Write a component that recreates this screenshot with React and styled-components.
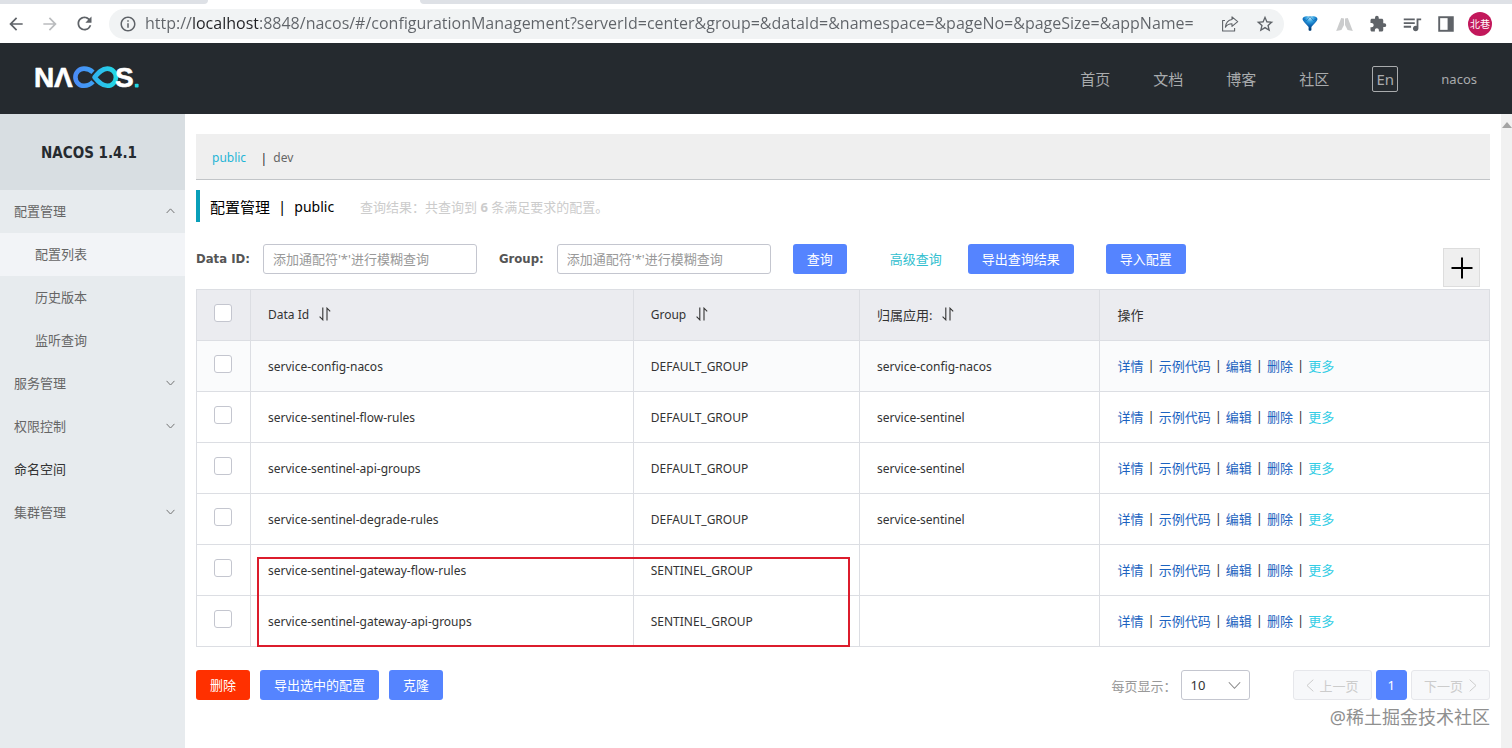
import styled, { createGlobalStyle, css } from "styled-components";
import { useState } from "react";
import {
  MdArrowBack,
  MdArrowForward,
  MdRefresh,
  MdInfoOutline,
  MdStarBorder,
  MdExtension,
  MdQueueMusic,
} from "react-icons/md";

const url =
  "http://localhost:8848/nacos/#/configurationManagement?serverId=center&group=&dataId=&namespace=&pageNo=&pageSize=&appName=";

const menu = [
  { name: "配置管理", arrow: "up" },
  { name: "配置列表", child: true, active: true },
  { name: "历史版本", child: true },
  { name: "监听查询", child: true },
  { name: "服务管理", arrow: "down" },
  { name: "权限控制", arrow: "down" },
  { name: "命名空间", dark: true },
  { name: "集群管理", arrow: "down" },
];

const configs = [
  { id: "service-config-nacos", group: "DEFAULT_GROUP", app: "service-config-nacos" },
  { id: "service-sentinel-flow-rules", group: "DEFAULT_GROUP", app: "service-sentinel" },
  { id: "service-sentinel-api-groups", group: "DEFAULT_GROUP", app: "service-sentinel" },
  { id: "service-sentinel-degrade-rules", group: "DEFAULT_GROUP", app: "service-sentinel" },
  { id: "service-sentinel-gateway-flow-rules", group: "SENTINEL_GROUP", app: "" },
  { id: "service-sentinel-gateway-api-groups", group: "SENTINEL_GROUP", app: "" },
];

const actions = ["详情", "示例代码", "编辑", "删除"];

const Logo = () => (
  <svg width="110" height="40" viewBox="-2 -6 110 40" role="img" aria-label="NACOS">
    <defs>
      <linearGradient id="loopLeft" x1="0" y1="0" x2="1" y2="0">
        <stop offset="0" stopColor="#4a8cf7" />
        <stop offset="1" stopColor="#3fa0f4" />
      </linearGradient>
      <linearGradient id="loopRight" x1="0" y1="0" x2="1" y2="0">
        <stop offset="0" stopColor="#2fb4f0" />
        <stop offset="1" stopColor="#22d8e4" />
      </linearGradient>
    </defs>
    <LogoText x="-1" y="22">N</LogoText>
    <LogoText x="19" y="22">Λ</LogoText>
    <path
      d="M58 7.2 C55 4.4 52 3.6 49 3.6 A8.6 8.6 0 0 0 49 20.8 C52.5 20.8 55.5 19.6 58 16.8"
      fill="none"
      stroke="url(#loopLeft)"
      strokeWidth="4.6"
    />
    <path
      d="M59.5 12.2 C63.5 7.6 67 3.6 72.3 3.6 A8.6 8.6 0 0 1 72.3 20.8 C67 20.8 63.5 16.8 59.5 12.2 Z"
      fill="none"
      stroke="url(#loopRight)"
      strokeWidth="4.6"
      strokeLinejoin="round"
    />
    <LogoText x="80" y="22">S</LogoText>
    <rect x="99.8" y="18.8" width="3.8" height="3.8" rx="0.8" fill="#22d8e4" />
  </svg>
);

const Chevron = ({ dir, size = 9 }) => {
  const paths = {
    up: "M1 9 L8 1.5 L15 9",
    down: "M1 1.5 L8 9 L15 1.5",
  };
  return (
    <svg width={size} height={size * 0.66} viewBox="0 0 16 10.5" fill="none" stroke="currentColor" strokeWidth={size > 10 ? 1.3 : 1.6}>
      <path d={paths[dir]} />
    </svg>
  );
};

const SideChevron = ({ dir }) => (
  <svg width="8" height="13" viewBox="0 0 8 13" fill="none" stroke="currentColor">
    <path d={dir === "left" ? "M7.3 0.7 L1 6.5 L7.3 12.3" : "M0.7 0.7 L7 6.5 L0.7 12.3"} />
  </svg>
);

const SortIcon = () => (
  <svg width="12" height="14" viewBox="0 0 12 14" fill="none" stroke="#333" strokeWidth="1.1">
    <path d="M3.8 0.5 V12.8 L0.6 9.6" />
    <path d="M8 13.5 V1.2 L11.2 4.4" />
  </svg>
);

const ShareIcon = () => (
  <svg width="18" height="18" viewBox="0 0 18 18" fill="none" stroke="#5f6368" strokeWidth="1.1" strokeLinejoin="round">
    <path d="M4 5.5 H1.6 V16 H13.6 V13" />
    <path d="M11 1.8 L16.7 6.6 L11 11.4 V8.7 C8 8.7 6 9.7 4.4 12.2 C4.8 8 7 5 11 4.5 Z" />
  </svg>
);

const PinIcon = () => (
  <svg width="16" height="17" viewBox="0 0 16 17">
    <defs>
      <radialGradient id="pin" cx="0.5" cy="0.12" r="0.75">
        <stop offset="0" stopColor="#b5e8fb" />
        <stop offset="0.35" stopColor="#2f9fe0" />
        <stop offset="0.7" stopColor="#0a62b0" />
        <stop offset="1" stopColor="#033f76" />
      </radialGradient>
    </defs>
    <path
      d="M0.5 4 C0.8 2.2 2.6 1.2 4.4 1.2 H11.6 C13.4 1.2 15.2 2.2 15.5 4 C15 6.6 11.4 9.6 9.4 12 V15.2 L8 16 L6.6 15.2 V12 C4.6 9.6 1 6.6 0.5 4 Z"
      fill="url(#pin)"
    />
    <path d="M1 3.6 L4.6 5.6 L8 1.6 L11.4 5.6 L15 3.6" fill="none" stroke="#0a62b0" strokeWidth="0.6" />
  </svg>
);

const PeaksIcon = () => (
  <svg width="17" height="14" viewBox="0 0 17 14" fill="#cbcccd">
    <path d="M0.2 14 L5.2 1 L8 1.4 V8 L5.4 13 Z" />
    <path d="M16.8 14 L11.8 1 L9 1.4 V8 L11.6 13 Z" />
  </svg>
);

const PanelIcon = () => (
  <svg width="16" height="16" viewBox="0 0 16 16">
    <rect x="1.2" y="1.2" width="13.6" height="13.6" fill="none" stroke="#5f6368" strokeWidth="1.9" />
    <rect x="9.6" y="1" width="5.4" height="14" fill="#5f6368" />
  </svg>
);

const App = () => {
  const [address, setAddress] = useState(url);

  return (
    <>
      <GlobalStyle />
      <Page>
        <TabStrip>
          <Tab $w="208px" $side="right" />
          <Tab $side="left" />
        </TabStrip>
        <Toolbar>
          <IconButton aria-label="Back">
            <MdArrowBack size={20} />
          </IconButton>
          <IconButton aria-label="Forward" $faded>
            <MdArrowForward size={20} />
          </IconButton>
          <IconButton aria-label="Reload">
            <MdRefresh size={21} />
          </IconButton>
          <AddressBar>
            <MdInfoOutline size={18} />
            <AddressInput
              aria-label="Address"
              value={address}
              onChange={(e) => setAddress(e.target.value)}
            />
            <IconButton aria-label="Share">
              <ShareIcon />
            </IconButton>
            <IconButton aria-label="Bookmark">
              <MdStarBorder size={20} />
            </IconButton>
          </AddressBar>
          <Extensions>
            <Slot>
              <PinIcon />
            </Slot>
            <Slot>
              <PeaksIcon />
            </Slot>
            <Slot>
              <MdExtension size={18} />
            </Slot>
            <Slot>
              <MdQueueMusic size={22} />
            </Slot>
            <Slot>
              <PanelIcon />
            </Slot>
            <Avatar>北巷</Avatar>
          </Extensions>
        </Toolbar>

        <Header>
          <Logo />
          <Nav>
            <NavLink href="#home">首页</NavLink>
            <NavLink href="#docs">文档</NavLink>
            <NavLink href="#blog">博客</NavLink>
            <NavLink href="#community">社区</NavLink>
            <LangButton>En</LangButton>
            <UserLink href="#user">nacos</UserLink>
          </Nav>
        </Header>

        <Body>
          <Sidebar>
            <Version>NACOS 1.4.1</Version>
            {menu.map((item) => (
              <MenuItem
                key={item.name}
                href="#menu"
                $child={item.child}
                $active={item.active}
                $dark={item.dark}
              >
                {item.name}
                {item.arrow && <Chevron dir={item.arrow} />}
              </MenuItem>
            ))}
          </Sidebar>

          <Main>
            <Namespaces>
              <NsLink href="#public" $active>
                public
              </NsLink>
              <span>|</span>
              <NsLink href="#dev">dev</NsLink>
            </Namespaces>

            <TitleRow>
              <Title>
                <span>配置管理</span>
                <span>|</span>
                <TitleName>public</TitleName>
              </Title>
              <Result>
                查询结果：共查询到 <b>6</b> 条满足要求的配置。
              </Result>
            </TitleRow>

            <Form onSubmit={(e) => e.preventDefault()}>
              <Field>
                <Label htmlFor="dataId">Data ID:</Label>
                <TextInput id="dataId" placeholder="添加通配符'*'进行模糊查询" />
              </Field>
              <Field>
                <Label htmlFor="group">Group:</Label>
                <TextInput id="group" placeholder="添加通配符'*'进行模糊查询" />
              </Field>
              <Button>查询</Button>
              <SearchActions>
                <Advanced href="#advanced">高级查询</Advanced>
                <Button type="button">导出查询结果</Button>
              </SearchActions>
              <ImportWrap>
                <Button type="button">导入配置</Button>
              </ImportWrap>
              <AddButton type="button" aria-label="新建配置">
                <svg width="22" height="22" viewBox="0 0 22 22" stroke="#000" strokeWidth="2">
                  <path d="M11 0.5 V21.5 M0.5 11 H21.5" />
                </svg>
              </AddButton>
            </Form>

            <TableWrap>
              <Table>
                <colgroup>
                  <Col $w="54px" />
                  <Col $w="29.6%" />
                  <Col $w="17.5%" />
                  <Col $w="18.6%" />
                  <Col />
                </colgroup>
                <thead>
                  <tr>
                    <CheckHead>
                      <Checkbox aria-label="全选" />
                    </CheckHead>
                    <Th>
                      <Sortable>
                        Data Id <SortIcon />
                      </Sortable>
                    </Th>
                    <Th>
                      <Sortable>
                        Group <SortIcon />
                      </Sortable>
                    </Th>
                    <Th>
                      <Sortable $cjk>
                        归属应用: <SortIcon />
                      </Sortable>
                    </Th>
                    <Th>
                      <Sortable $cjk>操作</Sortable>
                    </Th>
                  </tr>
                </thead>
                <tbody>
                  {configs.map((config, i) => (
                    <Row key={config.id} $hover={i === 0}>
                      <CheckCell>
                        <Checkbox aria-label={config.id} />
                      </CheckCell>
                      <Td>{config.id}</Td>
                      <Td>{config.group}</Td>
                      <Td>{config.app}</Td>
                      <Td>
                        <Actions>
                          {actions.map((action) => (
                            <ActionItem key={action}>
                              <ActionLink href="#action">{action}</ActionLink>
                              <span>|</span>
                            </ActionItem>
                          ))}
                          <ActionLink href="#more" $more>
                            更多
                          </ActionLink>
                        </Actions>
                      </Td>
                    </Row>
                  ))}
                </tbody>
              </Table>
              <Highlight />
            </TableWrap>

            <Footer>
              <Button $danger>删除</Button>
              <Button>导出选中的配置</Button>
              <Button>克隆</Button>
              <Paging>
                <PageLabel htmlFor="pageSize">每页显示：</PageLabel>
                <SelectWrap>
                  <Select id="pageSize" defaultValue="10">
                    <option>10</option>
                    <option>20</option>
                    <option>30</option>
                  </Select>
                  <Chevron dir="down" size={13} />
                </SelectWrap>
                <Pages>
                  <PageButton disabled>
                    <SideChevron dir="left" />
                    上一页
                  </PageButton>
                  <PageButton $current>1</PageButton>
                  <PageButton disabled>
                    下一页
                    <SideChevron dir="right" />
                  </PageButton>
                </Pages>
              </Paging>
            </Footer>
            <Credit>@稀土掘金技术社区</Credit>
          </Main>

          <Scrollbar>
            <svg width="10" height="6" viewBox="0 0 10 6" fill="#a3a3a3">
              <path d="M5 0 L10 6 H0 Z" />
            </svg>
          </Scrollbar>
        </Body>
      </Page>
    </>
  );
};

const GlobalStyle = createGlobalStyle`
  * {
    box-sizing: border-box;
  }
  body {
    margin: 0;
    background: #fff;
    color: #333;
    font-family: "Noto Sans", "Noto Sans CJK SC", sans-serif;
    font-size: 13px;
  }
  button, input, select {
    font: inherit;
    margin: 0;
  }
  a {
    text-decoration: none;
  }
`;

const Page = styled.div`
  display: flex;
  flex-direction: column;
  min-height: 100vh;
`;

const TabStrip = styled.div`
  display: flex;
  justify-content: space-between;
  gap: 212px;
  height: 4px;
`;

const Tab = styled.div`
  flex: ${(props) => (props.$w ? `0 0 ${props.$w}` : "1")};
  background: #dee1e6;
  border-radius: ${(props) => (props.$side === "right" ? "0 0 8px 0" : "0 0 0 8px")};
`;

const Toolbar = styled.div`
  display: flex;
  align-items: center;
  height: 39px;
  padding: 0 20px 0 6px;
  gap: 14px;
  color: #5f6368;
`;

const IconButton = styled.button`
  display: flex;
  padding: 0;
  border: none;
  background: none;
  color: ${(props) => (props.$faded ? "#babcbe" : "#5f6368")};
`;

const AddressBar = styled.div`
  flex: 1;
  display: flex;
  align-items: center;
  gap: 16px;
  height: 30px;
  padding: 0 9px 0 10px;
  border-radius: 15px;
  background: #f1f3f4;
`;

/* the host name is darker than the rest of the address */
const AddressInput = styled.input`
  flex: 1;
  min-width: 0;
  height: 28px;
  margin-left: -8px;
  padding: 0 0 2px;
  border: none;
  outline: none;
  font-family: "Open Sans", sans-serif;
  font-size: 16px;
  color: transparent;
  background: linear-gradient(90deg, #5f6368 47px, #202124 47px, #202124 113px, #5f6368 113px);
  background-clip: text;
  -webkit-background-clip: text;
`;

const Extensions = styled.div`
  display: flex;
  align-items: center;
  gap: 10px;
`;

const Slot = styled.span`
  display: flex;
  justify-content: center;
  width: 24px;
`;

const Avatar = styled.span`
  width: 24px;
  height: 24px;
  border-radius: 50%;
  background: #c2185b;
  color: #fff;
  font-size: 10px;
  line-height: 24px;
  text-align: center;
`;

const Header = styled.header`
  display: flex;
  align-items: center;
  justify-content: space-between;
  height: 71px;
  padding: 0 35px 0 33px;
  background: #252a2f;
`;

const LogoText = styled.text`
  font-family: "Liberation Sans", sans-serif;
  font-size: 28px;
  font-weight: 700;
  fill: #fff;
  stroke: #fff;
  stroke-width: 0.6;
  stroke-linejoin: round;
`;

const Nav = styled.nav`
  display: flex;
  align-items: center;
  gap: 43px;
`;

const NavLink = styled.a`
  color: #a9abad;
  font-size: 15px;
`;

const UserLink = styled(NavLink)`
  font-size: 13px;
`;

const LangButton = styled.button`
  width: 26px;
  height: 26px;
  padding: 0;
  border: 1px solid #a9abad;
  border-radius: 2px;
  background: none;
  color: #a9abad;
  font-size: 15px;
  line-height: 22px;
`;

const Body = styled.div`
  flex: 1;
  display: flex;
`;

const Sidebar = styled.aside`
  flex: 0 0 185px;
  background: #e7ebee;
`;

const Version = styled.div`
  height: 76px;
  line-height: 78px;
  padding-right: 7px;
  background: #d8dee2;
  color: #252a2f;
  font-family: "DejaVu Sans Condensed", "DejaVu Sans", sans-serif;
  font-size: 15px;
  font-weight: 700;
  text-align: center;
`;

const MenuItem = styled.a`
  display: flex;
  align-items: center;
  justify-content: space-between;
  height: 43px;
  padding: 0 10px 2px ${(props) => (props.$child ? "35px" : "14px")};
  background: ${(props) => (props.$active ? "#f2f4f7" : "transparent")};
  color: ${(props) => (props.$dark ? "#333" : "#666")};
`;

const Main = styled.main`
  flex: 1;
  min-width: 0;
  padding: 20px 11px 0 11px;
`;

const Namespaces = styled.div`
  display: flex;
  align-items: center;
  gap: 6px;
  height: 46px;
  padding: 2px 16px 0;
  border-bottom: 1px solid #c2c5c8;
  background: #efefef;
`;

const NsLink = styled.a`
  color: #666;
  font-size: 12px;
  ${(props) =>
    props.$active &&
    css`
      margin-right: 8px;
      color: #1fb5d6;
    `}
`;

const TitleRow = styled.div`
  display: flex;
  align-items: center;
  gap: 26px;
  height: 32px;
  margin: 10px 0 22px;
  padding-left: 10px;
  border-left: 4px solid #099fb9;
`;

const Title = styled.h1`
  display: flex;
  align-items: center;
  gap: 8px;
  margin: 0;
  color: #000;
  font-size: 15px;
  font-weight: 400;
`;

const TitleName = styled.span`
  font-size: 14px;
`;

const Result = styled.span`
  color: #ccc;
`;

const Form = styled.form`
  display: flex;
  align-items: flex-start;
  gap: 22px;
  padding-bottom: 2px;
`;

const Field = styled.div`
  display: flex;
  gap: 13px;
`;

const Label = styled.label`
  color: #555;
  font-family: "DejaVu Sans Condensed", "DejaVu Sans", sans-serif;
  font-weight: 700;
  line-height: 30px;
`;

const TextInput = styled.input`
  width: 214px;
  height: 30px;
  padding: 0 9px;
  border: 1px solid #c4c6cf;
  border-radius: 3px;
  background: #fff;
  &::placeholder {
    color: #999;
  }
`;

const Button = styled.button`
  height: 30px;
  padding: 0 14px 2px;
  border: none;
  border-radius: 3px;
  background: ${(props) => (props.$danger ? "#ff3000" : "#5584ff")};
  color: #fff;
  white-space: nowrap;
`;

const SearchActions = styled.div`
  display: flex;
  gap: 26px;
  margin-left: 21px;
`;

const Advanced = styled.a`
  color: #33bfd0;
  line-height: 30px;
`;

const ImportWrap = styled.div`
  margin-left: 10px;
`;

const AddButton = styled.button`
  display: flex;
  align-items: center;
  justify-content: center;
  width: 37px;
  height: 39px;
  margin: 4px 10px 0 auto;
  padding: 0;
  border: 1px solid #ddd;
  background: #efefef;
`;

const TableWrap = styled.div`
  position: relative;
`;

const Table = styled.table`
  width: 100%;
  table-layout: fixed;
  border-collapse: collapse;
  border: 1px solid #dcdee3;
`;

const Col = styled.col`
  width: ${(props) => props.$w};
`;

const cell = css`
  height: 51px;
  padding: 0 17px;
  border: 1px solid #dcdee3;
  font-size: 12px;
  font-weight: 400;
  text-align: left;
`;

const Th = styled.th`
  ${cell}
  background: #ebecf0;
`;

const CheckHead = styled(Th)`
  padding: 0 2px 4px 0;
  text-align: center;
`;

const Td = styled.td`
  ${cell}
`;

const CheckCell = styled(Td)`
  padding: 0 2px 4px 0;
  text-align: center;
`;

const Row = styled.tr`
  background: ${(props) => (props.$hover ? "#fafbfc" : "#fff")};
`;

const Checkbox = styled.input.attrs({ type: "checkbox" })`
  appearance: none;
  width: 18px;
  height: 18px;
  border: 1px solid #c4c6cf;
  border-radius: 3px;
  background: #fff;
  vertical-align: middle;
`;

const Sortable = styled.span`
  display: flex;
  align-items: center;
  gap: 10px;
  padding-bottom: 2px;
  font-size: ${(props) => (props.$cjk ? "13px" : "12px")};
`;

const Actions = styled.div`
  display: flex;
  gap: 4px;
  padding-bottom: 2px;
  font-size: 13px;
`;

const ActionItem = styled.span`
  display: flex;
  gap: 4px;
`;

const ActionLink = styled.a`
  color: ${(props) => (props.$more ? "#33cde5" : "#1c63c0")};
`;

/* red frame round the two gateway rows */
const Highlight = styled.div`
  position: absolute;
  left: 61px;
  bottom: 0;
  width: 45.8%;
  height: 90px;
  border: 2px solid #dc1c2c;
  pointer-events: none;
`;

const Footer = styled.div`
  display: flex;
  align-items: center;
  gap: 10px;
  margin-top: 23px;
`;

const Paging = styled.div`
  display: flex;
  align-items: center;
  margin-left: auto;
`;

const PageLabel = styled.label`
  margin-right: 4px;
  color: #999;
`;

const SelectWrap = styled.div`
  position: relative;
  margin-right: 43px;
  color: #888;
  svg {
    position: absolute;
    top: 11px;
    right: 9px;
    pointer-events: none;
  }
`;

const Select = styled.select`
  appearance: none;
  display: block;
  width: 69px;
  height: 30px;
  padding: 0 9px;
  border: 1px solid #c4c6cf;
  border-radius: 3px;
  background: #fff;
  color: #333;
`;

const Pages = styled.div`
  display: flex;
  gap: 4px;
`;

const PageButton = styled.button`
  display: flex;
  align-items: center;
  gap: 6px;
  height: 30px;
  padding: 0 ${(props) => (props.$current ? "11px" : "12px")};
  border: 1px solid ${(props) => (props.$current ? "#5584ff" : "#e6e7eb")};
  border-radius: 3px;
  background: ${(props) => (props.$current ? "#5584ff" : "#f7f8fa")};
  color: ${(props) => (props.$current ? "#fff" : "#ccc")};
`;

const Credit = styled.div`
  margin-top: 4px;
  color: #8f8f8f;
  font-size: 18px;
  line-height: 26px;
  text-align: right;
`;

const Scrollbar = styled.div`
  flex: 0 0 11px;
  display: flex;
  justify-content: flex-end;
  padding-top: 8px;
  background: #f1f1f1;
`;

export default App;
